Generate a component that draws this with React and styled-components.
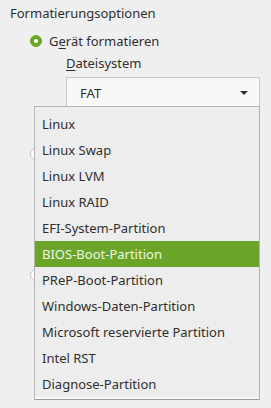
import React from 'react';
import styled, { createGlobalStyle } from 'styled-components';

const Global = createGlobalStyle`
  html, body {
    margin: 0;
    padding: 0;
    background: #efefef;
  }
  body {
    font-family: "Noto Sans", "Open Sans", sans-serif;
    font-size: 13px;
    color: #2f2f2f;
  }
`;

const Page = styled.div`
  position: relative;
  width: 271px;
  height: 408px;
  overflow: hidden;
  padding: 3px 0 0 10px;
  box-sizing: border-box;
`;

const Heading = styled.div`
  height: 20px;
  line-height: 20px;
`;

const Group = styled.div`
  display: flex;
  flex-direction: column;
  padding-left: ${(p) => p.$indent || 0}px;
`;

const RadioRow = styled.label`
  display: flex;
  align-items: center;
  gap: 7px;
  height: 20px;
  margin-top: ${(p) => p.$top || 0}px;
`;

const RadioDot = styled.span`
  width: 12px;
  height: 12px;
  border-radius: 50%;
  box-sizing: border-box;
  background: ${(p) => (p.$checked ? '#6aa62a' : '#ffffff')};
  border: 1px solid ${(p) => (p.$checked ? '#6aa62a' : '#c4c4c4')};
  display: flex;
  align-items: center;
  justify-content: center;
  &::after {
    content: '';
    width: 4px;
    height: 4px;
    border-radius: 50%;
    background: #ffffff;
    display: ${(p) => (p.$checked ? 'block' : 'none')};
  }
`;

const FieldLabel = styled.div`
  height: 20px;
  line-height: 20px;
  margin-top: 2px;
`;

const Mnemonic = styled.span`
  text-decoration: underline;
  text-underline-offset: 2px;
`;

const Combo = styled.div`
  margin-top: 4px;
  width: 194px;
  height: 31px;
  box-sizing: border-box;
  border: 1px solid #c8c8c8;
  background: #f8f8f8;
  display: flex;
  align-items: center;
  justify-content: space-between;
  padding: 0 11px 0 13px;
`;

const Arrow = styled.span`
  width: 0;
  height: 0;
  border-left: 4px solid transparent;
  border-right: 4px solid transparent;
  border-top: 4px solid #2f2f2f;
`;

const Popup = styled.ul`
  position: absolute;
  left: 34px;
  top: 106px;
  width: 226px;
  margin: 0;
  padding: 4px 0 2px;
  list-style: none;
  box-sizing: border-box;
  background: #ededed;
  border: 1px solid #b4b4b4;
  border-bottom-color: #9c9c9c;
  box-shadow: inset 0 -2px 0 #fafafa;
`;

const Item = styled.li`
  height: 26px;
  line-height: 26px;
  padding-left: 7px;
  background: ${(p) => (p.$active ? '#6aa52a' : 'transparent')};
  color: ${(p) => (p.$active ? '#eef6e6' : '#2f2f2f')};
`;

const types = [
  'Linux',
  'Linux Swap',
  'Linux LVM',
  'Linux RAID',
  'EFI-System-Partition',
  'BIOS-Boot-Partition',
  'PReP-Boot-Partition',
  'Windows-Daten-Partition',
  'Microsoft reservierte Partition',
  'Intel RST',
  'Diagnose-Partition',
];

export default function App() {
  return (
    <Page>
      <Global />
      <Heading>Formatierungsoptionen</Heading>
      <Group $indent={20}>
        <RadioRow $top={8}>
          <RadioDot $checked />
          <span>
            G<Mnemonic>e</Mnemonic>rät formatieren
          </span>
        </RadioRow>
        <Group $indent={36}>
          <FieldLabel>
            <Mnemonic>D</Mnemonic>ateisystem
          </FieldLabel>
          <Combo>
            <span>FAT</span>
            <Arrow />
          </Combo>
        </Group>
        {/* further options, covered by the open popup */}
        <RadioRow $top={36}>
          <RadioDot />
        </RadioRow>
        <RadioRow $top={101}>
          <RadioDot />
        </RadioRow>
      </Group>
      <Popup>
        {types.map((t) => (
          <Item key={t} $active={t === 'BIOS-Boot-Partition'}>
            {t}
          </Item>
        ))}
      </Popup>
    </Page>
  );
}
